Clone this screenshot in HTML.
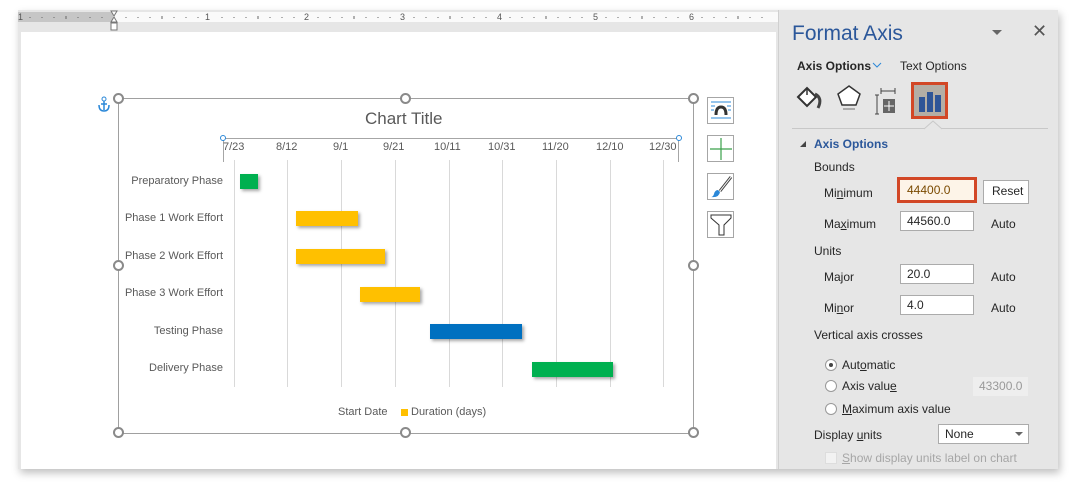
<!DOCTYPE html>
<html><head><meta charset="utf-8"><style>
*{margin:0;padding:0;box-sizing:border-box}
body{width:1074px;height:489px;background:#fff;position:relative;overflow:hidden;font-family:"Segoe UI","Liberation Sans",sans-serif;color:#444}
.a{position:absolute}
.t{position:absolute;font-size:11px;color:#595959;white-space:nowrap}
.p{position:absolute;font-size:12px;color:#262626;white-space:nowrap}
.box{position:absolute;background:#fff;border:1px solid #ababab;font-size:12px;color:#262626;padding:2px 0 0 6px}
.h{position:absolute;width:11px;height:11px;border:2px solid #8a8a8a;border-radius:50%;background:#fff}
.g{position:absolute;top:160px;width:1px;height:227px;background:#d9d9d9}
.bar{position:absolute;height:15px;box-shadow:2px 2px 3px rgba(0,0,0,.35)}
.ib{position:absolute;left:707px;width:27px;height:27px;border:1px solid #a6a6a6;background:#fff}
u{text-decoration:underline}
</style></head><body>
<div class="a" style="left:18px;top:10px;width:1040px;height:459px;background:#e6e6e6;box-shadow:2px 4px 8px rgba(0,0,0,.25)"></div>
<div class="a" style="left:18px;top:12px;width:760px;height:10px;background:#fafafa"></div>
<div class="a" style="left:18px;top:12px;width:95px;height:10px;background:#c6c6c6"></div>
<svg class="a" style="left:18px;top:10px" width="760" height="22">
<g fill="#555" font-size="9" font-family="Liberation Sans">
<text x="0" y="10">1</text><text x="187" y="10">1</text><text x="286" y="10">2</text><text x="382" y="10">3</text><text x="479" y="10">4</text><text x="575" y="10">5</text><text x="671" y="10">6</text></g>
<g stroke="#666"><path d="M12 7v1M24 7v1M36 7v1M48 6v3M60 7v1M72 7v1M84 7v1M108 7v1M120 7v1M132 7v1M144 6v3M156 7v1M168 7v1M180 7v1M204 7v1M216 7v1M228 7v1M240 6v3M252 7v1M264 7v1M276 7v1M300 7v1M312 7v1M324 7v1M336 6v3M348 7v1M360 7v1M372 7v1M396 7v1M408 7v1M420 7v1M432 6v3M444 7v1M456 7v1M468 7v1M492 7v1M504 7v1M516 7v1M528 6v3M540 7v1M552 7v1M564 7v1M588 7v1M600 7v1M612 7v1M624 6v3M636 7v1M648 7v1M660 7v1M684 7v1M696 7v1M708 7v1M720 6v3M732 7v1M744 7v1"/></g>
<path d="M93 1h6l-3 5zM93 12h6l-3-5z" fill="#fff" stroke="#777"/><rect x="93" y="13" width="6" height="7" fill="#fff" stroke="#777"/>
</svg>
<div class="a" style="left:21px;top:32px;width:755px;height:437px;background:#fff"></div>
<div class="a" style="left:778px;top:10px;width:1px;height:459px;background:#d0d0d0"></div>
<div class="a" style="left:118px;top:98px;width:576px;height:336px;border:1.5px solid #a0a0a0"></div>
<div class="h" style="left:113px;top:93px"></div><div class="h" style="left:400px;top:93px"></div><div class="h" style="left:688px;top:93px"></div>
<div class="h" style="left:113px;top:260px"></div><div class="h" style="left:688px;top:260px"></div>
<div class="h" style="left:113px;top:427px"></div><div class="h" style="left:400px;top:427px"></div><div class="h" style="left:688px;top:427px"></div>
<svg class="a" style="left:98px;top:95px" width="16" height="20"><circle cx="6" cy="4" r="2" fill="none" stroke="#2b88d8"/><path d="M6 6v9M1 10q0 6 5 6q5 0 5-6M3 9h6" fill="none" stroke="#2b88d8" stroke-width="1.5"/></svg>
<div class="a" style="left:365px;top:109px;font-size:17px;color:#595959">Chart Title</div>
<div class="a" style="left:223px;top:138px;width:456px;height:24px;border:1px solid #a6a6a6;border-bottom:none"></div>
<div class="a" style="left:220px;top:135px;width:6px;height:6px;border:1px solid #2b88d8;border-radius:50%;background:#fff"></div>
<div class="a" style="left:676px;top:135px;width:6px;height:6px;border:1px solid #2b88d8;border-radius:50%;background:#fff"></div>
<div class="t" style="left:223px;top:141px">7/23</div><div class="t" style="left:276px;top:141px">8/12</div><div class="t" style="left:333px;top:141px">9/1</div><div class="t" style="left:383px;top:141px">9/21</div><div class="t" style="left:434px;top:141px">10/11</div><div class="t" style="left:488px;top:141px">10/31</div><div class="t" style="left:542px;top:141px">11/20</div><div class="t" style="left:596px;top:141px">12/10</div><div class="t" style="left:649px;top:141px">12/30</div>
<div class="g" style="left:234px"></div><div class="g" style="left:287px"></div><div class="g" style="left:341px"></div><div class="g" style="left:395px"></div><div class="g" style="left:449px"></div><div class="g" style="left:502px"></div><div class="g" style="left:556px"></div><div class="g" style="left:610px"></div><div class="g" style="left:663px"></div>
<div class="t" style="right:851px;top:175px">Preparatory Phase</div>
<div class="t" style="right:851px;top:212px">Phase 1 Work Effort</div>
<div class="t" style="right:851px;top:250px">Phase 2 Work Effort</div>
<div class="t" style="right:851px;top:287px">Phase 3 Work Effort</div>
<div class="t" style="right:851px;top:325px">Testing Phase</div>
<div class="t" style="right:851px;top:362px">Delivery Phase</div>
<div class="bar" style="left:240px;top:174px;width:18px;background:#00b050"></div>
<div class="bar" style="left:296px;top:211px;width:62px;background:#ffc000"></div>
<div class="bar" style="left:296px;top:249px;width:89px;background:#ffc000"></div>
<div class="bar" style="left:360px;top:287px;width:60px;background:#ffc000"></div>
<div class="bar" style="left:430px;top:324px;width:92px;background:#0070c0"></div>
<div class="bar" style="left:532px;top:362px;width:81px;background:#00b050"></div>
<div class="t" style="left:338px;top:406px">Start Date</div>
<div class="a" style="left:401px;top:409px;width:7px;height:7px;background:#ffc000"></div>
<div class="t" style="left:411px;top:406px">Duration (days)</div>
<div class="ib" style="top:97px"><svg width="27" height="27"><path d="M3 4h20M3 8h4M19 8h4M3 12h3M20 12h3M3 20h20" stroke="#2b88d8"/><path d="M8 17q0-8 5-8q5 0 5 8" fill="none" stroke="#333" stroke-width="3"/></svg></div>
<div class="ib" style="top:135px"><svg width="27" height="27"><path d="M13 2v22M2 13h22" stroke="#3aa04a" stroke-width="1.2"/></svg></div>
<div class="ib" style="top:173px"><svg width="27" height="27"><path d="M23 3l-11 14" stroke="#444" stroke-width="3"/><path d="M23 3l-11 14" stroke="#fff" stroke-width="1"/><path d="M10 16q-3 0-4 4q-1 3-3 3q8 1 9-5z" fill="#2b88d8"/></svg></div>
<div class="ib" style="top:211px"><svg width="27" height="27"><path d="M3 3h20v3l-7 7v10h-5v-10l-8-7z" fill="#fff" stroke="#333"/></svg></div>
<div class="a" style="left:792px;top:22px;font-size:21px;color:#2b579a">Format Axis</div>
<div class="a" style="left:992px;top:30px;width:0;height:0;border-left:5px solid transparent;border-right:5px solid transparent;border-top:5px solid #666"></div>
<div class="a" style="left:1032px;top:21px;font-size:18px;color:#555">✕</div>
<div class="a" style="left:797px;top:59px;font-size:12px;font-weight:bold;color:#262626">Axis Options</div>
<svg class="a" style="left:872px;top:62px" width="10" height="7"><path d="M1 1l4 4l4-4" fill="none" stroke="#2b88d8"/></svg>
<div class="p" style="left:900px;top:59px">Text Options</div>
<svg class="a" style="left:795px;top:82px" width="155" height="37">
<path d="M3 15l9-9l9 9l-9 9z" fill="#fff" stroke="#333" stroke-width="2"/><path d="M12 6v7" stroke="#333" stroke-width="1.5"/><path d="M20 12q8 4 3 14" fill="none" stroke="#444" stroke-width="3"/>
<path d="M54 4l11 8l-4 11h-14l-4-11z" fill="#fff" stroke="#333" stroke-width="1.5"/><path d="M48 27h12" stroke="#aaa" stroke-width="2"/>
<path d="M82 13v19M80 13h4M80 32h4M86 9h14M86 6v6M100 6v6" stroke="#444"/><rect x="88" y="17" width="12" height="14" fill="#666"/><path d="M94 19v10M89 24h10" stroke="#fff"/>
<rect x="117.5" y="1.5" width="34" height="34" fill="#b4aea5" stroke="#d24726" stroke-width="3"/><rect x="124" y="15" width="6" height="15" fill="#2f5597"/><rect x="132" y="10" width="6" height="20" fill="#2f5597"/><rect x="140" y="13" width="6" height="17" fill="#2f5597"/>
</svg>
<div class="a" style="left:792px;top:128px;width:256px;height:1px;background:#c8c8c8"></div>
<svg class="a" style="left:924px;top:120px" width="18" height="10"><path d="M0 9l9-8l9 8" fill="#e6e6e6" stroke="#c8c8c8"/></svg>
<div class="a" style="left:800px;top:141px;width:0;height:0;border-left:6px solid transparent;border-bottom:6px solid #444"></div>
<div class="a" style="left:814px;top:137px;font-size:12px;font-weight:bold;color:#2b579a">Axis Options</div>
<div class="p" style="left:814px;top:160px">Bounds</div>
<div class="p" style="left:824px;top:186px">Mi<u>n</u>imum</div>
<div class="a" style="left:897px;top:177px;width:80px;height:26px;border:2px solid #d24726;background:#d24726"></div>
<div class="box" style="left:900px;top:180px;width:74px;height:20px;background:#fdf4e8;border-color:#fdf4e8;color:#7a4a00">44400.0</div>
<div class="box" style="left:983px;top:180px;width:46px;height:24px;padding-left:8px;padding-top:3px">Reset</div>
<div class="p" style="left:824px;top:217px">Ma<u>x</u>imum</div>
<div class="box" style="left:900px;top:211px;width:74px;height:20px">44560.0</div>
<div class="p" style="left:991px;top:217px">Auto</div>
<div class="p" style="left:814px;top:244px">Units</div>
<div class="p" style="left:824px;top:270px">Ma<u>j</u>or</div>
<div class="box" style="left:900px;top:264px;width:74px;height:20px">20.0</div>
<div class="p" style="left:991px;top:270px">Auto</div>
<div class="p" style="left:824px;top:301px">Mi<u>n</u>or</div>
<div class="box" style="left:900px;top:295px;width:74px;height:20px">4.0</div>
<div class="p" style="left:991px;top:301px">Auto</div>
<div class="p" style="left:814px;top:328px">Vertical axis crosses</div>
<div class="a" style="left:825px;top:359px;width:12px;height:12px;border:1px solid #999;border-radius:50%;background:#fff"></div><div class="a" style="left:829px;top:363px;width:4px;height:4px;border-radius:50%;background:#444"></div>
<div class="p" style="left:842px;top:358px">Aut<u>o</u>matic</div>
<div class="a" style="left:825px;top:380px;width:12px;height:12px;border:1px solid #999;border-radius:50%;background:#fff"></div>
<div class="p" style="left:842px;top:379px">Axis valu<u>e</u></div>
<div class="a" style="left:973px;top:377px;width:55px;height:19px;background:#eee;font-size:12px;color:#999;padding:2px 0 0 6px">43300.0</div>
<div class="a" style="left:825px;top:403px;width:12px;height:12px;border:1px solid #999;border-radius:50%;background:#fff"></div>
<div class="p" style="left:842px;top:402px"><u>M</u>aximum axis value</div>
<div class="p" style="left:814px;top:428px">Display <u>u</u>nits</div>
<div class="box" style="left:938px;top:424px;width:91px;height:20px">None</div>
<div class="a" style="left:1015px;top:432px;width:0;height:0;border-left:4px solid transparent;border-right:4px solid transparent;border-top:4px solid #666"></div>
<div class="a" style="left:825px;top:452px;width:12px;height:12px;border:1px solid #ddd;background:#f2f2f2"></div>
<div class="a" style="left:842px;top:451px;font-size:12px;color:#a6a6a6"><u>S</u>how display units label on chart</div>
</body></html>
